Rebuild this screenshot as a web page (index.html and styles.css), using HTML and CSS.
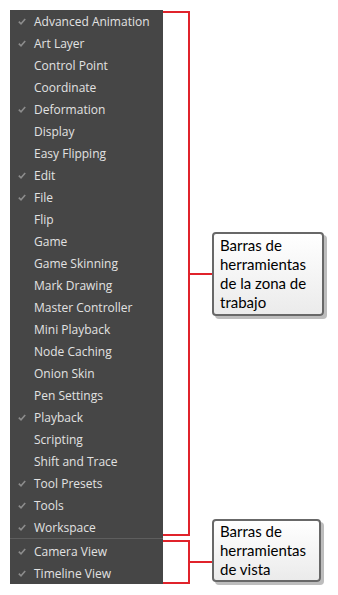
FILE: index.html
```html
<!DOCTYPE html>
<html lang="es">
<head>
  <title>Barras de herramientas</title>
  <link rel="stylesheet" href="styles.css">
</head>

<body>
  <div class="page">
    <!-- Toolbar menu -->
    <div class="menu">
      <div class="item on"><span class="check"><svg viewBox="0 0 8 7"><path d="M0.8 3.6 L3 5.8 L7.2 1"/></svg></span>Advanced Animation</div>
      <div class="item on"><span class="check"><svg viewBox="0 0 8 7"><path d="M0.8 3.6 L3 5.8 L7.2 1"/></svg></span>Art Layer</div>
      <div class="item"><span class="check"></span>Control Point</div>
      <div class="item"><span class="check"></span>Coordinate</div>
      <div class="item on"><span class="check"><svg viewBox="0 0 8 7"><path d="M0.8 3.6 L3 5.8 L7.2 1"/></svg></span>Deformation</div>
      <div class="item"><span class="check"></span>Display</div>
      <div class="item"><span class="check"></span>Easy Flipping</div>
      <div class="item on"><span class="check"><svg viewBox="0 0 8 7"><path d="M0.8 3.6 L3 5.8 L7.2 1"/></svg></span>Edit</div>
      <div class="item on"><span class="check"><svg viewBox="0 0 8 7"><path d="M0.8 3.6 L3 5.8 L7.2 1"/></svg></span>File</div>
      <div class="item"><span class="check"></span>Flip</div>
      <div class="item"><span class="check"></span>Game</div>
      <div class="item"><span class="check"></span>Game Skinning</div>
      <div class="item"><span class="check"></span>Mark Drawing</div>
      <div class="item"><span class="check"></span>Master Controller</div>
      <div class="item"><span class="check"></span>Mini Playback</div>
      <div class="item"><span class="check"></span>Node Caching</div>
      <div class="item"><span class="check"></span>Onion Skin</div>
      <div class="item"><span class="check"></span>Pen Settings</div>
      <div class="item on"><span class="check"><svg viewBox="0 0 8 7"><path d="M0.8 3.6 L3 5.8 L7.2 1"/></svg></span>Playback</div>
      <div class="item"><span class="check"></span>Scripting</div>
      <div class="item"><span class="check"></span>Shift and Trace</div>
      <div class="item on"><span class="check"><svg viewBox="0 0 8 7"><path d="M0.8 3.6 L3 5.8 L7.2 1"/></svg></span>Tool Presets</div>
      <div class="item on"><span class="check"><svg viewBox="0 0 8 7"><path d="M0.8 3.6 L3 5.8 L7.2 1"/></svg></span>Tools</div>
      <div class="item on"><span class="check"><svg viewBox="0 0 8 7"><path d="M0.8 3.6 L3 5.8 L7.2 1"/></svg></span>Workspace</div>
      <div class="separator"></div>
      <div class="item on"><span class="check"><svg viewBox="0 0 8 7"><path d="M0.8 3.6 L3 5.8 L7.2 1"/></svg></span>Camera View</div>
      <div class="item on"><span class="check"><svg viewBox="0 0 8 7"><path d="M0.8 3.6 L3 5.8 L7.2 1"/></svg></span>Timeline View</div>
    </div>

    <!-- Callouts -->
    <div class="notes">
      <div class="group workspace">
        <div class="bracket"></div>
        <div class="tick"></div>
        <div class="box">Barras de herramientas de la zona de trabajo</div>
      </div>
      <div class="group view">
        <div class="bracket"></div>
        <div class="tick"></div>
        <div class="box">Barras de herramientas de vista</div>
      </div>
    </div>
  </div>
</body>
</html>
```

FILE: styles.css
```css
body {
  margin: 0;
  background-color: white;
  font-family: "Open Sans", Arial, sans-serif;
}

.page {
  display: flex;
  padding: 10px;
}

/* Menu */
.menu {
  width: 153px;
  background-color: #464646;
  display: flex;
  flex-direction: column;
}

.item {
  height: 22px;
  display: flex;
  align-items: center;
  font-size: 12px;
  color: #e2e2e2;
}

.check {
  width: 24px;
  display: flex;
  justify-content: center;
}

.check svg {
  width: 8px;
  height: 7px;
  fill: none;
  stroke: #8c8c8c;
  stroke-width: 1.6;
}

.separator {
  height: 1px;
  margin: 0 0 1px 0;
  background-color: #5e5e5e;
}

/* Callouts */
.notes {
  display: flex;
  flex-direction: column;
  padding-top: 1px;
  gap: 4px;
}

.group {
  display: flex;
  align-items: center;
}

.bracket {
  width: 27px;
  border: 2px solid #e0232b;
  border-left: none;
  box-sizing: border-box;
}

.workspace .bracket { height: 525px; }
.view .bracket { height: 44px; }

.tick {
  width: 22px;
  height: 2px;
  background-color: #e0232b;
}

.box {
  font-family: Lato, "Open Sans", sans-serif;
  font-size: 15px;
  line-height: 19px;
  color: black;
  background: linear-gradient(#ffffff, #ebebeb);
  border: 2px solid #686868;
  border-radius: 4px;
  box-shadow: 3px 3px 0 #bdbdbd;
  padding: 2px 6px;
}

.workspace .box { width: 96px; }

.view { align-items: flex-start; }
.view .tick { margin-top: 21px; }
.view .box { width: 93px; margin-top: -21px; padding: 1px 6px; }
```
